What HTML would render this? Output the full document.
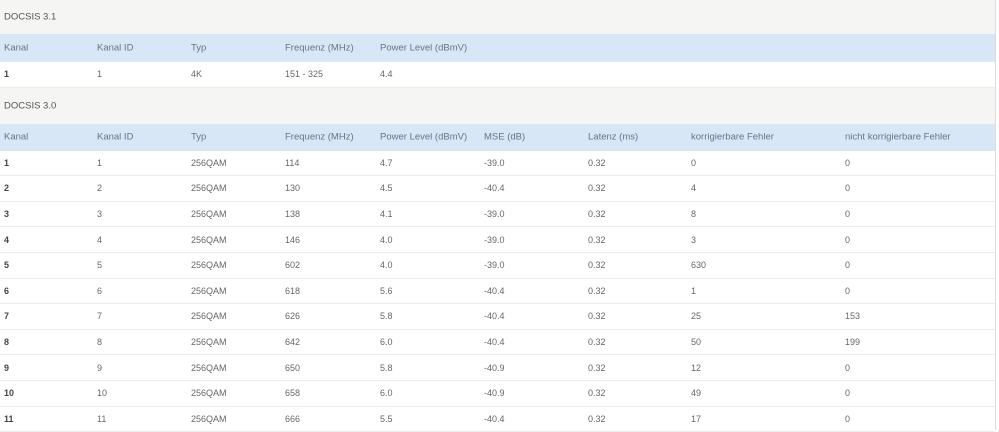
<!DOCTYPE html><html><head><meta charset="utf-8"><style>
body{margin:0;width:999px;height:430px;overflow:hidden;background:#fff;font-family:"Liberation Sans",sans-serif;font-size:9px;color:#666}
.w{position:absolute;left:0;top:0;width:995px;border-right:1px solid #ddd;height:430px}
.r{position:relative;height:25.6px;border-bottom:1px solid #ececec;box-sizing:border-box;background:#fff}
.r span{position:absolute;top:50%;transform:translateY(-50%);white-space:nowrap}
.t{background:#f5f5f3;height:34px;border-bottom:none}
.t2{height:36px;background:#f5f5f3}
.h{background:#d8e7f5;height:28px;border-bottom:none;color:#6a7480;font-size:9.5px}
.h2{height:27px}
.t span{color:#555;font-size:9.5px}
b{font-weight:bold;color:#444}
span:nth-child(1){left:4px}span:nth-child(2){left:97px}span:nth-child(3){left:191px}span:nth-child(4){left:285px}span:nth-child(5){left:380px}span:nth-child(6){left:484px}span:nth-child(7){left:588px}span:nth-child(8){left:691px}span:nth-child(9){left:845px}
</style></head><body><div class="w">
<div class="r t"><span>DOCSIS 3.1</span></div>
<div class="r h"><span>Kanal</span><span>Kanal ID</span><span>Typ</span><span>Frequenz (MHz)</span><span>Power Level (dBmV)</span></div>
<div class="r"><span><b>1</b></span><span>1</span><span>4K</span><span>151 - 325</span><span>4.4</span></div>
<div class="r t t2"><span>DOCSIS 3.0</span></div>
<div class="r h h2"><span>Kanal</span><span>Kanal ID</span><span>Typ</span><span>Frequenz (MHz)</span><span>Power Level (dBmV)</span><span>MSE (dB)</span><span>Latenz (ms)</span><span>korrigierbare Fehler</span><span>nicht korrigierbare Fehler</span></div>
<div class="r"><span><b>1</b></span><span>1</span><span>256QAM</span><span>114</span><span>4.7</span><span>-39.0</span><span>0.32</span><span>0</span><span>0</span></div>
<div class="r"><span><b>2</b></span><span>2</span><span>256QAM</span><span>130</span><span>4.5</span><span>-40.4</span><span>0.32</span><span>4</span><span>0</span></div>
<div class="r"><span><b>3</b></span><span>3</span><span>256QAM</span><span>138</span><span>4.1</span><span>-39.0</span><span>0.32</span><span>8</span><span>0</span></div>
<div class="r"><span><b>4</b></span><span>4</span><span>256QAM</span><span>146</span><span>4.0</span><span>-39.0</span><span>0.32</span><span>3</span><span>0</span></div>
<div class="r"><span><b>5</b></span><span>5</span><span>256QAM</span><span>602</span><span>4.0</span><span>-39.0</span><span>0.32</span><span>630</span><span>0</span></div>
<div class="r"><span><b>6</b></span><span>6</span><span>256QAM</span><span>618</span><span>5.6</span><span>-40.4</span><span>0.32</span><span>1</span><span>0</span></div>
<div class="r"><span><b>7</b></span><span>7</span><span>256QAM</span><span>626</span><span>5.8</span><span>-40.4</span><span>0.32</span><span>25</span><span>153</span></div>
<div class="r"><span><b>8</b></span><span>8</span><span>256QAM</span><span>642</span><span>6.0</span><span>-40.4</span><span>0.32</span><span>50</span><span>199</span></div>
<div class="r"><span><b>9</b></span><span>9</span><span>256QAM</span><span>650</span><span>5.8</span><span>-40.9</span><span>0.32</span><span>12</span><span>0</span></div>
<div class="r"><span><b>10</b></span><span>10</span><span>256QAM</span><span>658</span><span>6.0</span><span>-40.9</span><span>0.32</span><span>49</span><span>0</span></div>
<div class="r"><span><b>11</b></span><span>11</span><span>256QAM</span><span>666</span><span>5.5</span><span>-40.4</span><span>0.32</span><span>17</span><span>0</span></div>
</div></body></html>
